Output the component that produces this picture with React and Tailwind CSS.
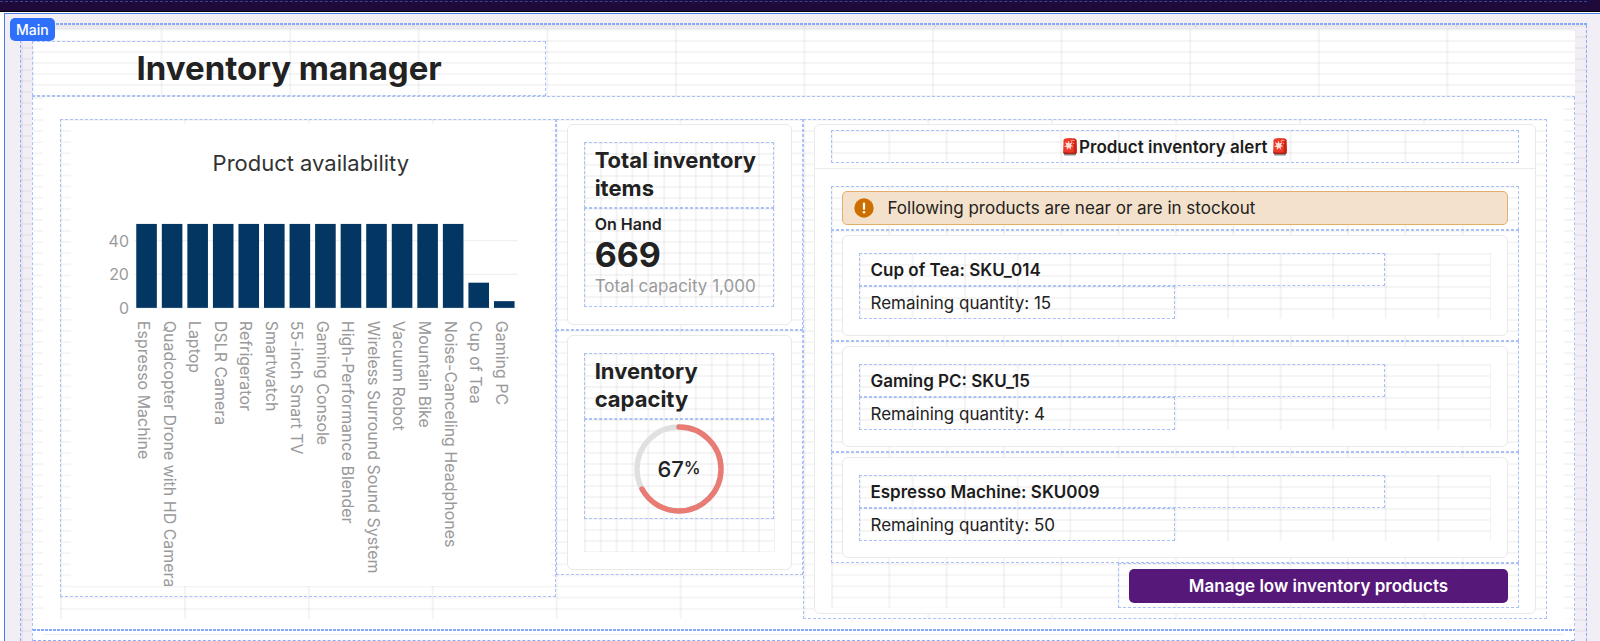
const products = [
  { name: 'Espresso Machine', quantity: 50 },
  { name: 'Quadcopter Drone with HD Camera', quantity: 50 },
  { name: 'Laptop', quantity: 50 },
  { name: 'DSLR Camera', quantity: 50 },
  { name: 'Refrigerator', quantity: 50 },
  { name: 'Smartwatch', quantity: 50 },
  { name: '55-inch Smart TV', quantity: 50 },
  { name: 'Gaming Console', quantity: 50 },
  { name: 'High-Performance Blender', quantity: 50 },
  { name: 'Wireless Surround Sound System', quantity: 50 },
  { name: 'Vacuum Robot', quantity: 50 },
  { name: 'Mountain Bike', quantity: 50 },
  { name: 'Noise-Canceling Headphones', quantity: 50 },
  { name: 'Cup of Tea', quantity: 15 },
  { name: 'Gaming PC', quantity: 4 },
];

const lowStock = [
  { id: 1, label: 'Cup of Tea: SKU_014', quantity: 15 },
  { id: 2, label: 'Gaming PC: SKU_15', quantity: 4 },
  { id: 3, label: 'Espresso Machine: SKU009', quantity: 50 },
];

// editor canvas guides: 12 columns, rows of about 11px
const gridLines =
  'bg-[linear-gradient(to_right,rgba(0,0,0,0.045)_2px,transparent_2px),linear-gradient(to_bottom,rgba(0,0,0,0.04)_2px,transparent_2px)]';
const rowLines = 'bg-[linear-gradient(to_bottom,rgba(0,0,0,0.045)_2px,transparent_2px)]';
const dashed = 'border border-dashed border-[#a9c0f9]';
const dashedRule = 'h-[2px] bg-[repeating-linear-gradient(to_right,#86a8fa_0_3px,transparent_3px_4px)]';
const card = 'rounded-md border border-[#e9e9e9] bg-white';

function AvailabilityChart() {
  const baseline = 184;
  const unit = 1.68;
  const step = 25.57;
  return (
    <svg viewBox="0 0 480 462" className="block w-full bg-white" role="img" aria-label="Product availability">
      <text x="240" y="47" textAnchor="middle" fontSize="22" fill="#333333">
        Product availability
      </text>
      {[0, 20, 40].map(tick => (
        <g key={tick}>
          <line x1="63" x2="447" y1={baseline - tick * unit} y2={baseline - tick * unit} stroke="#ececec" />
          <text x="58" y={baseline - tick * unit + 6} textAnchor="end" fontSize="16" fill="#9a9a9a">
            {tick}
          </text>
        </g>
      ))}
      {products.map((product, i) => (
        <g key={product.name}>
          <rect
            x={65.3 + i * step}
            y={baseline - product.quantity * unit}
            width="20.6"
            height={product.quantity * unit}
            fill="#033663"
          />
          <text transform={`translate(${67 + i * step} 197) rotate(90)`} fontSize="16" fill="#9a9a9a">
            {product.name}
          </text>
        </g>
      ))}
    </svg>
  );
}

function CapacityRing({ percent }) {
  const radius = 42;
  const length = 2 * Math.PI * radius;
  return (
    <div className="relative h-[90px] w-[90px]">
      <svg viewBox="0 0 90 90" className="block h-full w-full">
        <circle cx="45" cy="45" r={radius} fill="none" stroke="#e0e0e0" strokeWidth="5.4" />
        <circle
          cx="45"
          cy="45"
          r={radius}
          fill="none"
          stroke="#e97b75"
          strokeWidth="5.4"
          strokeLinecap="round"
          strokeDasharray={`${(length * percent) / 100} ${length}`}
          transform="rotate(-90 45 45)"
        />
      </svg>
      <div className="absolute inset-0 flex items-center justify-center text-[22px] font-medium text-[#222]">
        <span>{percent}</span>
        <span className="text-[17px]">%</span>
      </div>
    </div>
  );
}

function SirenIcon() {
  return (
    <svg width="16" height="20" viewBox="0 0 16 20" aria-hidden="true">
      <rect x="1.8" y="15" width="12.4" height="3.6" rx="1.6" fill="#8c8886" />
      <rect x="1.2" y="13" width="13.6" height="4" rx="1.8" fill="#a92014" />
      <path d="M1.6 3.2C1.8 1.8 3.8 1 8 1s6.2.8 6.4 2.2l.4 10.6c0 1.3-2.6 1.9-6.8 1.9s-6.8-.6-6.8-1.9z" fill="#ea3a28" />
      <path d="M11.6 1.5c1.9.3 2.7.9 2.8 1.7l.4 10.6c0 .8-1.2 1.3-3 1.6z" fill="#cc2014" />
      <path
        d="M6.6 3.6l.9 2.8 3-1.2-1.6 2.8 2.5 1.3-2.8.5.5 3-2.2-2-2.1 2.2.1-3.1-2.8-.2 2.4-1.7-1.6-2.7 2.8 1z"
        fill="#ffe0da"
      />
      <path d="M9.4 3.4h3.4M9.4 3.4v1.8M11 6.4h1.2" stroke="#ffa397" strokeWidth="0.9" />
    </svg>
  );
}

function LowStockItem({ item }) {
  return (
    <li className={`${dashed} px-[10px] py-1`}>
      <div className={`${card} px-4 pt-[17px] pb-4`}>
        <div className={`${gridLines} [background-size:calc(100%/12)_11px] border-r border-[#f2f2f2]`}>
          <div className={`${dashed} flex h-[33px] w-10/12 items-center pl-[10px]`}>
            <h3 className="text-[17px] leading-6 font-semibold text-[#1c1c1c]">{item.label}</h3>
          </div>
          <div className={`${dashed} flex h-[33px] w-6/12 items-center pl-[10px]`}>
            <p className="text-[17px] leading-6 text-[#222]">Remaining quantity: {item.quantity}</p>
          </div>
        </div>
      </div>
    </li>
  );
}

function CardTitle({ children }) {
  return (
    <div className={`${dashed} h-[66px] pt-[3px] pl-[10px]`}>
      <h2 className="text-[22px] leading-7 font-bold text-[#222]">{children}</h2>
    </div>
  );
}

export default function App() {
  return (
    <div className="overflow-hidden bg-white font-['Inter',sans-serif] text-[#222]">
      <div className="h-3 border-b border-black bg-[#1e0b3b] pt-px">
        <div className="mr-[13px] border-t border-dashed border-[#2f4a94]" />
      </div>

      <main className="relative mt-px ml-1 border-t border-l border-[#4d7ce0] bg-[#f1eff5] pt-[9px] pr-[13px] pl-[15px]">
        <span className="absolute top-1 left-[5px] flex h-[23px] items-center rounded-[5px] bg-[#2f70fa] px-[6px] text-sm font-medium text-white">
          Main
        </span>

        <div className={dashedRule} />
        <div
          className={`${gridLines} [background-size:calc(100%/12)_11px] border-x border-dashed border-[#8aabf9] px-[11px] pt-[3px]`}
        >
          <header
            className={`${gridLines} [background-size:calc(100%/12)_11px] rounded-tr border-t border-[#e4e4e6] bg-white pt-3`}
          >
            <div className={`${dashed} flex h-[55px] w-4/12 items-center justify-center`}>
              <h1 className="text-[33px] font-bold">Inventory manager</h1>
            </div>
            <div className="border-b border-dashed border-[#a9c0f9]" />
          </header>

          <div className="border-x border-dashed border-[#a9c0f9] bg-white">
            <div className={`${rowLines} [background-size:100%_calc(100%/47)] px-[10px]`}>
              <div className="bg-white px-[17px] pt-[22px]">
                <div
                  className={`${gridLines} grid grid-cols-12 items-start [background-size:calc(100%/12)_calc(100%/45)]`}
                >
                  <section className={`${dashed} col-span-4 pt-1 pr-1 pb-[10px] pl-[10px]`}>
                    <AvailabilityChart />
                  </section>

                  <div className="col-span-2">
                    <section className={`${dashed} px-[10px] py-1`}>
                      <div className={`${card} px-4 py-[17px]`}>
                        <div
                          className={`${gridLines} [background-size:calc(100%/12)_11px] border-r border-[#f2f2f2]`}
                        >
                          <CardTitle>Total inventory items</CardTitle>
                          <div className={`${dashed} h-[99px] pt-[3px] pl-[10px]`}>
                            <p className="text-base leading-6 font-semibold">On Hand</p>
                            <p className="text-[34px] leading-[38px] font-bold">669</p>
                            <p className="text-[17px] leading-6 text-[#9a9a9a]">Total capacity 1,000</p>
                          </div>
                        </div>
                      </div>
                    </section>

                    <section className={`${dashed} px-[10px] py-1`}>
                      <div className={`${card} px-4 py-[17px]`}>
                        <div
                          className={`${gridLines} [background-size:calc(100%/12)_11px] border-r border-[#f2f2f2] pb-[33px]`}
                        >
                          <CardTitle>Inventory capacity</CardTitle>
                          <div className={`${dashed} flex h-[100px] items-center justify-center`}>
                            <CapacityRing percent={67} />
                          </div>
                        </div>
                      </div>
                    </section>
                  </div>

                  <section className={`${dashed} col-span-6 px-[10px] py-1`}>
                    <div className={card}>
                      <div className="border-b border-[#ebebeb] px-4 py-[5px]">
                        <div className={`${gridLines} [background-size:calc(100%/12)_11px]`}>
                          <div className={`${dashed} flex h-[33px] items-center justify-center gap-px`}>
                            <SirenIcon />
                            <h2 className="text-[17px] leading-6 font-semibold text-[#1c1c1c]">
                              Product inventory alert
                            </h2>
                            <span className="pl-1">
                              <SirenIcon />
                            </span>
                          </div>
                        </div>
                      </div>
                      <div className="px-4 pt-[17px] pb-[5px]">
                        <div className={`${gridLines} [background-size:calc(100%/12)_calc(100%/38)]`}>
                          <div className={`${dashed} px-[10px] py-1`}>
                            <div
                              role="alert"
                              className="flex h-[34px] items-center gap-[13px] rounded-[5px] border border-[#e3ae6c] bg-[#f4e1cb] pl-[11px]"
                            >
                              <svg width="20" height="20" viewBox="0 0 20 20" aria-hidden="true">
                                <circle cx="10" cy="10" r="9.7" fill="#cc6f00" />
                                <path d="M10 5.6v5.2" stroke="white" strokeWidth="2.2" strokeLinecap="round" />
                                <circle cx="10" cy="14.2" r="1.3" fill="white" />
                              </svg>
                              <p className="text-[17px] leading-6">Following products are near or are in stockout</p>
                            </div>
                          </div>
                          <ul>
                            {lowStock.map(item => (
                              <LowStockItem key={item.id} item={item} />
                            ))}
                          </ul>
                          <div className={`${dashed} ml-auto w-7/12 px-[10px] pt-[5px] pb-1`}>
                            <button
                              type="button"
                              className="h-[34px] w-full rounded-[5px] bg-[#561979] text-[17px] leading-6 font-semibold text-white"
                            >
                              Manage low inventory products
                            </button>
                          </div>
                        </div>
                      </div>
                    </div>
                  </section>
                </div>
              </div>
            </div>

            <div className={`${dashedRule} mt-[10px]`} />
            <div className="h-[10px] border-b border-dashed border-[#8aabf9] px-[10px] pt-[3px]">
              <div className="border-b border-[#ececec]" />
            </div>
          </div>
        </div>
      </main>
    </div>
  );
}
